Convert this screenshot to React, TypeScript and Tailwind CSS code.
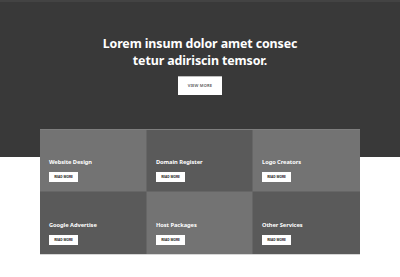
import React from "react";

const services = [
  { title: "Website Design", light: true },
  { title: "Domain Register", light: false },
  { title: "Logo Creators", light: true },
  { title: "Google Advertise", light: false },
  { title: "Host Packages", light: true },
  { title: "Other Services", light: false },
];

export default function App() {
  return (
    <div
      className="w-[400px] h-[277px] bg-white overflow-hidden"
      style={{ fontFamily: '"Noto Sans", "Open Sans", sans-serif' }}
    >
      <section className="h-[157px] bg-[#393939] border-t-2 border-[#434343] flex flex-col items-center pt-[33px]">
        <h1 className="text-white font-bold text-[12.4px] leading-[17px] text-center tracking-[-0.1px]">
          Lorem insum dolor amet consec
          <br />
          tetur adiriscin temsor.
        </h1>
        <button className="mt-[7px] w-[44px] h-[19px] bg-white border-t border-[#bdbdbd] text-[4px] tracking-[0.2px] text-[#555] font-semibold uppercase flex items-center justify-center">
          View More
        </button>
      </section>
      <div className="mx-[40px] -mt-[28px] grid grid-cols-[107px_106px_107px] grid-rows-[62px_62px] border-t border-[#7e7e7e] border-b border-b-[#d6d6d6]">
        {services.map((s, i) => (
          <div
            key={s.title}
            className={`flex flex-col justify-end pl-[9px] pb-[9px] ${
              s.light ? "bg-[#737373]" : "bg-[#5a5a5a]"
            } ${i % 3 !== 2 ? "border-r border-[#666666]" : ""} ${
              i < 3 ? "border-b border-[#666666]" : ""
            }`}
          >
            <div className="text-white font-bold text-[5.7px] leading-[8px] tracking-[-0.05px]">
              {s.title}
            </div>
            <div className="mt-[6px] w-[29px] h-[10px] bg-white flex items-center justify-center text-[3.2px] font-bold text-[#222] uppercase">
              Read More
            </div>
          </div>
        ))}
      </div>
    </div>
  );
}
